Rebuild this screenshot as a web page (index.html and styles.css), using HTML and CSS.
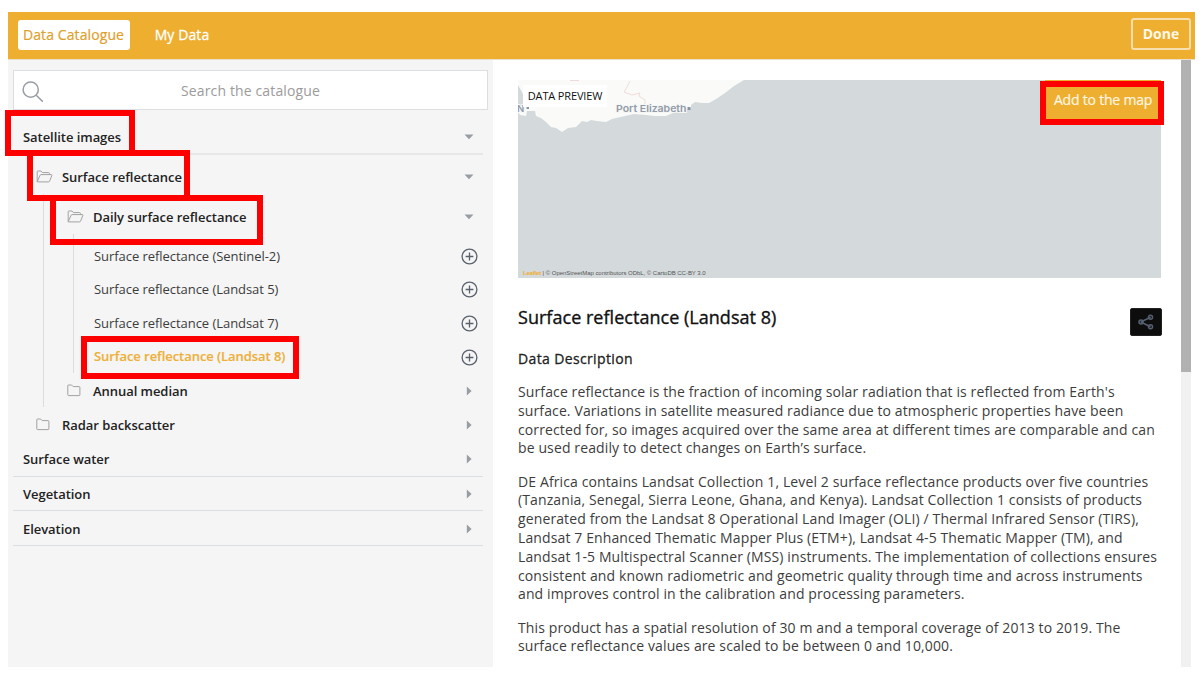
FILE: index.html
```html
<!DOCTYPE html>
<html lang="en">
<head>
<meta charset="utf-8">
<title>Data Catalogue</title>
<link rel="stylesheet" href="styles.css">
</head>
<body>
<svg class="defs" width="0" height="0">
  <symbol id="open" viewBox="0 0 17 13"><path d="M1.2 11.5V1.6Q1.2 1 1.8 1H5L6.4 2.6H12.6Q13.4 2.6 13.4 3.4V4.6M1.2 11.7L4.2 5.1Q4.4 4.6 5 4.6H15.4Q16.2 4.6 15.9 5.3L13.6 11.2Q13.3 11.9 12.6 11.9H1.6Q1.1 11.9 1.2 11.5"/></symbol>
  <symbol id="folder" viewBox="0 0 14 13"><path d="M.8 1.5Q.8 1 1.4 1H4.6L6.2 2.6H12.2Q12.9 2.6 12.9 3.3V10.9Q12.9 11.6 12.2 11.6H1.5Q.8 11.6 .8 10.9Z"/></symbol>
  <symbol id="plus" viewBox="0 0 17 17"><circle cx="8.5" cy="8.5" r="7.4"/><path d="M8.5 4.6V12.4M4.6 8.5H12.4"/></symbol>
  <symbol id="down" viewBox="0 0 10 6"><path d="M.5 .5H9.5L5 5.3Z"/></symbol>
  <symbol id="right" viewBox="0 0 10 10"><path d="M2.8 .5V9.5L7.6 5Z"/></symbol>
</svg>
<div class="window">
  <header class="topbar">
    <button class="tab active">Data Catalogue</button>
    <button class="tab plain">My Data</button>
    <button class="done">Done</button>
  </header>
  <main class="content">
    <aside class="side">
      <div class="search">
        <svg width="22" height="22" viewBox="0 0 22 22"><circle cx="8.7" cy="8.7" r="7.6"/><path d="M14.2 14.2L20.8 20.6"/></svg>
        <span>Search the catalogue</span>
      </div>
      <div class="row top first"><span>Satellite images</span><svg class="arrow down"><use href="#down"/></svg></div>
      <div class="row sr"><svg class="fo"><use href="#open"/></svg><span>Surface reflectance</span><svg class="arrow down"><use href="#down"/></svg></div>
      <div class="branch outer">
        <div class="row daily"><svg class="fo"><use href="#open"/></svg><span>Daily surface reflectance</span><svg class="arrow down"><use href="#down"/></svg></div>
        <div class="branch inner">
          <div class="item"><span>Surface reflectance (Sentinel-2)</span><svg class="plus"><use href="#plus"/></svg></div>
          <div class="item"><span>Surface reflectance (Landsat 5)</span><svg class="plus"><use href="#plus"/></svg></div>
          <div class="item"><span>Surface reflectance (Landsat 7)</span><svg class="plus"><use href="#plus"/></svg></div>
          <div class="item chosen"><span>Surface reflectance (Landsat 8)</span><svg class="plus"><use href="#plus"/></svg></div>
        </div>
        <div class="row annual"><svg class="fc"><use href="#folder"/></svg><span>Annual median</span><svg class="arrow right"><use href="#right"/></svg></div>
      </div>
      <div class="row radar"><svg class="fc"><use href="#folder"/></svg><span>Radar backscatter</span><svg class="arrow right"><use href="#right"/></svg></div>
      <div class="row top water"><span>Surface water</span><svg class="arrow right"><use href="#right"/></svg></div>
      <div class="row top"><span>Vegetation</span><svg class="arrow right"><use href="#right"/></svg></div>
      <div class="row top"><span>Elevation</span><svg class="arrow right"><use href="#right"/></svg></div>
    </aside>
    <section class="detail">
      <div class="map">
        <svg class="coast" width="643" height="198" viewBox="0 0 643 198">
          <path class="land" d="M0 0H226L216 6 207 13 198 19 191 23H184L177 22 173 25 173 28 164 31 155 33 148 36H137L128 35 116 34 107 36 98 38 94 39 88 42 79 41 73 40 69 42 64 41 58 47 50 48 44 52 38 48 33 47 28 42 23 38 18 36 17 31 9 31 8 36 2 35 0 32V27L9 25 4 12 0 5Z"/>
          <path class="road" d="M52 .5H61M112 1L109 7 106 12 114 15 122 13 121 16 127 20 127 24"/>
          <text x="-1" y="31.500" class="town">N</text><path class="dot" d="M8.500 26.500h2.500v2.500h-2.500zM169.500 27h3v3h-3z"/>
          <text x="98" y="32" class="town" textLength="70.500" lengthAdjust="spacingAndGlyphs">Port Elizabeth</text>
        </svg>
        <span class="preview">DATA PREVIEW</span>
        <button class="add">Add to the map</button>
        <span class="credit"><b>Leaflet</b> | © OpenStreetMap contributors ODbL, © CartoDB CC-BY 3.0</span>
      </div>
      <div class="heading"><h2>Surface reflectance (Landsat 8)</h2>
        <button class="share" aria-label="Share"><svg width="16" height="16" viewBox="0 0 16 16"><path d="M2.700 8L12.600 3.300M2.700 8L12.600 12.700"/><circle cx="3" cy="8" r="2"/><circle cx="12.500" cy="3.300" r="2"/><circle cx="12.500" cy="12.700" r="2"/></svg></button>
      </div>
      <h3>Data Description</h3>
      <p>Surface reflectance is the fraction of incoming solar radiation that is reflected from Earth's<br>surface. Variations in satellite measured radiance due to atmospheric properties have been<br>corrected for, so images acquired over the same area at different times are comparable and can<br>be used readily to detect changes on Earth’s surface.</p>
      <p>DE Africa contains Landsat Collection 1, Level 2 surface reflectance products over five countries<br>(Tanzania, Senegal, Sierra Leone, Ghana, and Kenya). Landsat Collection 1 consists of products<br>generated from the Landsat 8 Operational Land Imager (OLI) / Thermal Infrared Sensor (TIRS),<br>Landsat 7 Enhanced Thematic Mapper Plus (ETM+), Landsat 4-5 Thematic Mapper (TM), and<br>Landsat 1-5 Multispectral Scanner (MSS) instruments. The implementation of collections ensures<br>consistent and known radiometric and geometric quality through time and across instruments<br>and improves control in the calibration and processing parameters.</p>
      <p>This product has a spatial resolution of 30 m and a temporal coverage of 2013 to 2019. The<br>surface reflectance values are scaled to be between 0 and 10,000.</p>
    </section>
    <div class="scroll"><div class="thumb"></div></div>
  </main>
</div>
<div class="mark m1"></div><div class="mark m2"></div><div class="mark m3"></div><div class="mark m4"></div><div class="mark m5"></div>
</body>
</html>
```
FILE: styles.css
```css
* { box-sizing: border-box; }
body { margin: 0; background: #fff; font-family: "Open Sans", "Noto Sans", sans-serif; color: #222; position: relative; width: 1204px; height: 684px; overflow: hidden; white-space: nowrap; }
button { font-family: inherit; padding: 0; border: 0; margin: 0; }
svg { flex: none; display: block; }
.defs { position: absolute; }
.window { width: 1187px; height: 655px; margin: 12px 0 0 8px; display: flex; flex-direction: column; }
.topbar { height: 48px; flex: none; background: #eeae2f; border-bottom: 1px solid #e9dfca; display: flex; align-items: flex-start; padding: 8px 4px 0 10px; }
.tab { height: 30px; font-size: 14px; background: none; padding-bottom: 2px; }
.active { width: 112px; background: #fff; border-radius: 3px; color: #dfa02a; letter-spacing: .1px; padding-right: 1px; -webkit-text-stroke: .2px; }
.plain { width: 56px; margin-left: 24px; color: #fff; letter-spacing: .1px; -webkit-text-stroke: .3px; }
.done { margin: -2px 0 0 auto; width: 60px; height: 32px; border: 2px solid #f9dfae; border-radius: 3px; background: none; color: #fff8e8; font-weight: 700; font-size: 14px; padding-bottom: 2px; }
.content { flex: 1; display: flex; min-height: 0; }
.side { width: 485px; background: #f5f5f5; padding: 10px 5px 0; }
.search { height: 40px; width: 475px; background: #fff; border: 1px solid #dcdfe1; display: flex; align-items: center; padding-left: 8px; margin-bottom: 9px; }
.search svg { fill: none; stroke: #999ea5; stroke-width: 1.500; margin-top: 3px; }
.search span { flex: 1; text-align: center; font-size: 14px; color: #9b9b9b; padding-right: 30px; letter-spacing: .13px; padding-top: 1px; }
.row { display: flex; align-items: center; font-size: 13px; font-weight: 600; letter-spacing: -.05px; width: 470px; height: 34.500px; line-height: 18px; }
.top { border-bottom: 1px solid #dcdfe1; padding-left: 10px; padding-top: 1px; }
.first { height: 36px; border-bottom: 2px solid #e7e7e7; padding-top: 2px; }
.water { padding-top: 0; }
.arrow { margin-left: auto; margin-right: 9px; width: 10px; fill: #989da3; }
.down { height: 6px; margin-top: -1px; }
.right { height: 10px; }
.fo, .fc { fill: none; stroke: #a2a2a2; stroke-width: 1; height: 13px; margin-right: 9px; }
.fo { width: 17px; margin-top: -1px; }
.fc { width: 14px; margin-right: 12px; margin-top: -1px; }
.sr { height: 39px; padding: 5px 0 0 23px; }
.radar { padding-left: 23px; padding-top: 1px; height: 35px; }
.branch { border-left: 1px solid #dcdcdc; }
.outer { margin-left: 30px; width: 440px; }
.outer .row { width: 439px; padding-left: 23px; }
.outer .daily { height: 40px; padding-top: 6px; }
.outer .annual { height: 34px; padding-top: 1px; }
.inner { margin-left: 29px; width: 410px; padding-top: 5px; }
.item { height: 33.600px; display: flex; align-items: center; font-size: 13px; padding-left: 20px; color: #3c3c3c; letter-spacing: -.05px; }
.item span { margin-top: -.4px; }
.plus { width: 17px; height: 17px; margin-left: auto; margin-right: 5px; margin-top: 1px; fill: none; stroke: #59616c; stroke-width: 1.300; }
.chosen { font-weight: 600; color: #eeb03a; letter-spacing: -.06px; -webkit-text-stroke: .15px; }
.detail { flex: 1; padding: 20px 0 0 25px; min-width: 0; }
.map { position: relative; width: 643px; height: 198px; background: #d4dadc; overflow: hidden; }
.land { fill: #fafaf8; }
.road { fill: none; stroke: #efdcda; stroke-width: 1; }
.town { font: 600 9.500px Inter, sans-serif; fill: #929ca8; stroke: #f5f6f6; stroke-width: 2; paint-order: stroke; }
.dot { fill: #8793a0; }
.preview { position: absolute; left: 5px; top: 5px; width: 84px; height: 22px; line-height: 22px; background: #fff; text-align: center; font-size: 11px; letter-spacing: -.15px; color: #111; }
.add { position: absolute; right: 0; top: 0; width: 116px; height: 40px; background: #eeae2f; color: #fff6e1; font-size: 14px; letter-spacing: -.2px; padding-bottom: 2px; -webkit-text-stroke: .2px; }
.credit { position: absolute; left: 5px; bottom: 1px; font: 6px/8px "Liberation Sans", sans-serif; letter-spacing: -.03px; color: #555; }
.credit b { font-weight: 700; color: #eeae2f; letter-spacing: -.2px; }
.heading { display: flex; margin-top: 29.500px; height: 40px; width: 643.500px; justify-content: space-between; }
h2 { margin: -3px 0 0; font-size: 18px; line-height: 24px; font-weight: 400; letter-spacing: .03px; -webkit-text-stroke: .35px; color: #111; }
.share { width: 32px; height: 28px; background: #0d0d0d; border: 1px solid #222; border-radius: 2px; display: grid; place-items: center; }
.share svg { fill: none; stroke: #566070; stroke-width: 1.500; }
h3 { margin: 1.500px 0 14px; font-size: 14px; line-height: 20px; font-weight: 400; letter-spacing: .36px; -webkit-text-stroke: .3px; color: #222; }
p { margin: 0 0 14.400px; font-size: 14px; line-height: 18.800px; letter-spacing: .118px; color: #3d3d3d; }
.scroll { width: 10px; margin-right: 4px; background: #f1f1f1; }
.thumb { height: 312px; background: #b1b1b1; }
.mark { position: absolute; border: 6px solid #f00; }
.m1 { left: 5px; top: 110px; width: 130px; height: 46px; }
.m2 { left: 27px; top: 150px; width: 163px; height: 51px; }
.m3 { left: 50px; top: 195px; width: 213px; height: 50px; }
.m4 { left: 81px; top: 336px; width: 218px; height: 43px; }
.m5 { left: 1040px; top: 81px; width: 124px; height: 44px; }
```
